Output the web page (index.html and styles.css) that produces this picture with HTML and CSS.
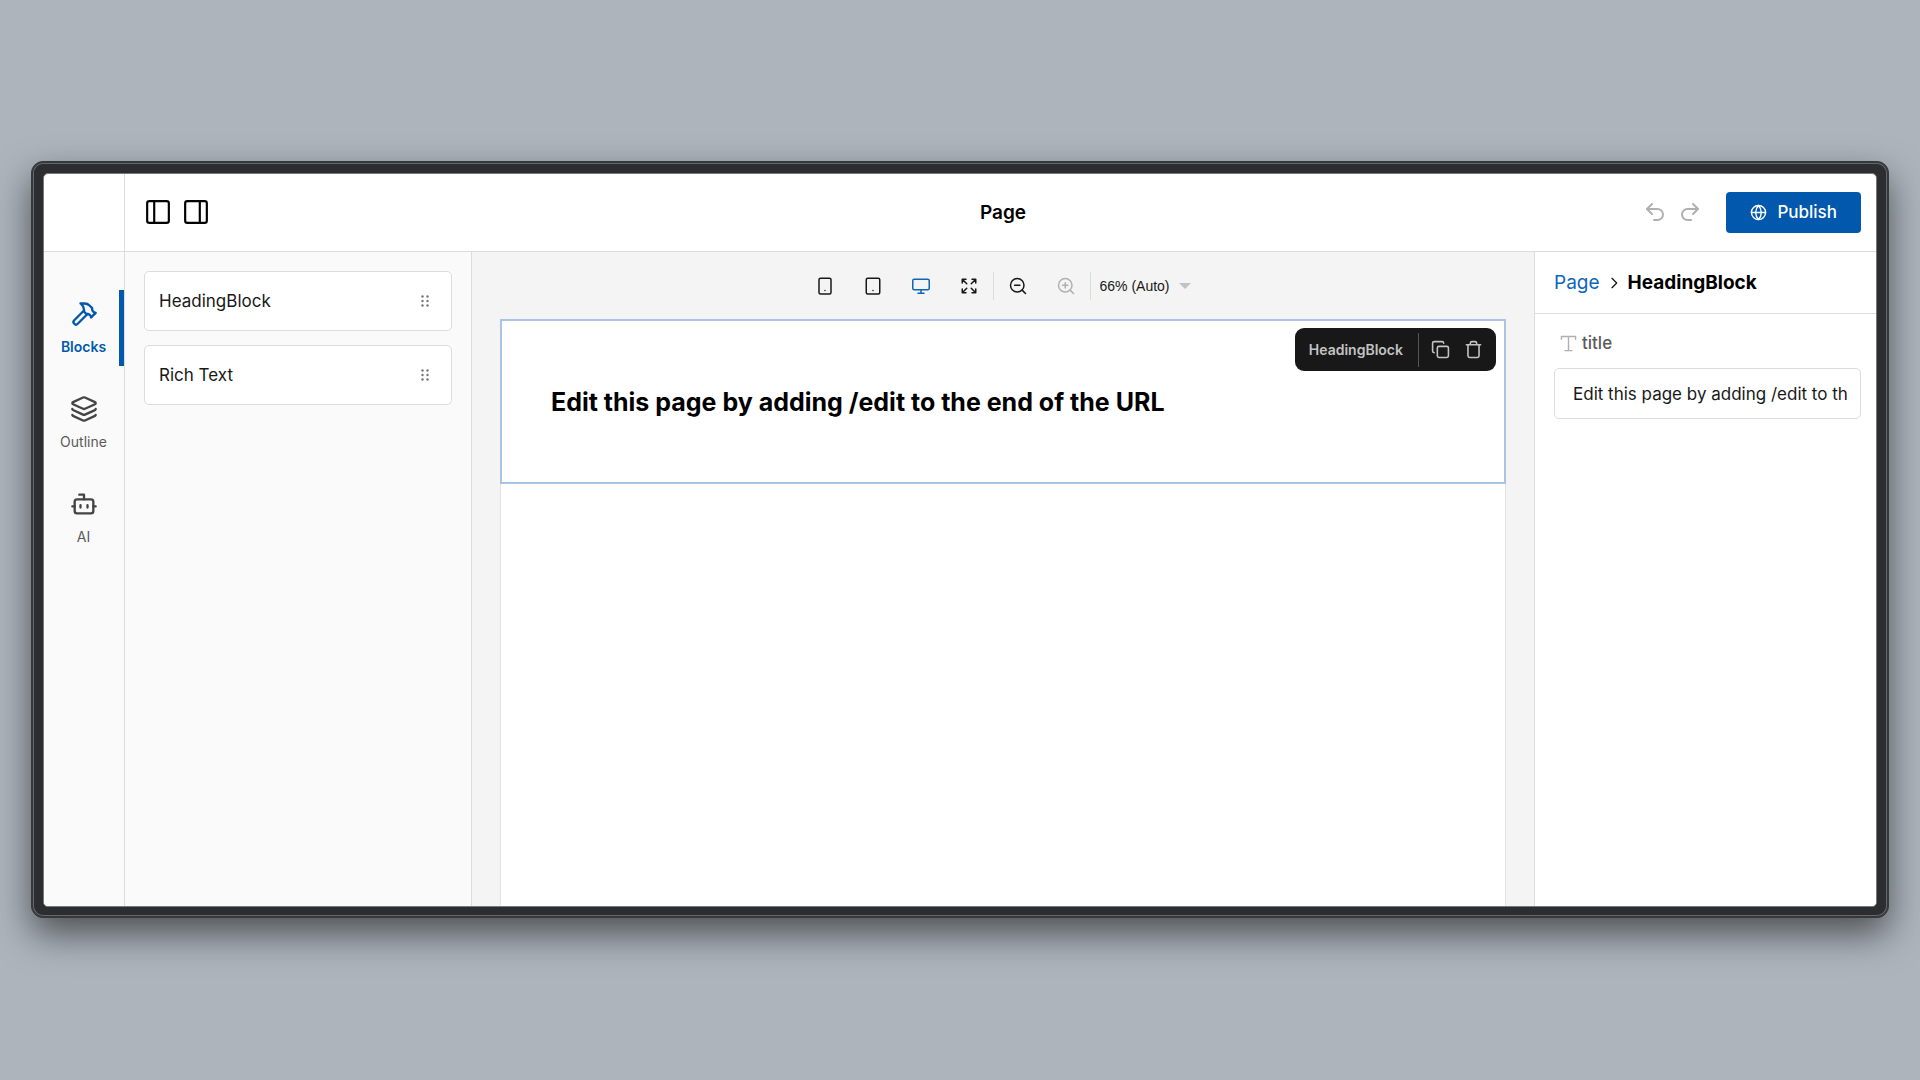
FILE: index.html
```html
<!DOCTYPE html>
<html lang="en">
<head>
<meta charset="utf-8">
<title>Page editor</title>
<meta name="viewport" content="width=device-width, initial-scale=1">
<link rel="stylesheet" href="styles.css">
</head>
<body>
<div class="frame">
<div class="editor">
  <header class="header">
    <div class="header-corner"></div>
    <div class="header-main">
      <div class="panel-toggles">
        <button class="icon-button" type="button" aria-label="Toggle left sidebar"><svg class="icon icon-toggle" viewBox="0 0 24 24"><rect x="2" y="2" width="20" height="20" rx="2"/><path d="M8.500 2v20"/></svg></button>
        <button class="icon-button" type="button" aria-label="Toggle right sidebar"><svg class="icon icon-toggle" viewBox="0 0 24 24"><rect x="2" y="2" width="20" height="20" rx="2"/><path d="M15.500 2v20"/></svg></button>
      </div>
      <h1 class="header-title">Page</h1>
      <div class="header-actions">
        <button class="icon-button faded" type="button" aria-label="Undo"><svg class="icon icon-history" viewBox="0 0 24 24"><path d="M9 14 4 9l5-5"/><path d="M4 9h10.500a5.500 5.500 0 0 1 0 11H11"/></svg></button>
        <button class="icon-button faded" type="button" aria-label="Redo"><svg class="icon icon-history" viewBox="0 0 24 24"><path d="m15 14 5-5-5-5"/><path d="M20 9H9.500a5.500 5.500 0 0 0 0 11H13"/></svg></button>
        <button class="publish" type="button"><svg class="icon icon-globe" viewBox="0 0 24 24"><circle cx="12" cy="12" r="10"/><path d="M12 2a14.500 14.500 0 0 0 0 20 14.500 14.500 0 0 0 0-20M2 12h20"/></svg>Publish</button>
      </div>
    </div>
  </header>
  <div class="workspace">
    <nav class="rail" aria-label="Plugins">
      <button class="rail-item active" type="button"><svg class="icon icon-rail" viewBox="0 0 24 24"><path d="m15 12-8.373 8.373a1 1 0 1 1-3-3L12 9"/><path d="m18 15 4-4"/><path d="m21.500 11.500-1.914-1.914A2 2 0 0 1 19 8.172V7l-2.260-2.260a6 6 0 0 0-4.202-1.756L9 2.960l.920.820A6.180 6.180 0 0 1 12 8.400V10l2 2h1.172a2 2 0 0 1 1.414.586L18.500 14.500"/></svg>Blocks</button>
      <button class="rail-item" type="button"><svg class="icon icon-rail" viewBox="0 0 24 24"><path d="M12.830 2.180a2 2 0 0 0-1.660 0L2.600 6.080a1 1 0 0 0 0 1.830l8.580 3.910a2 2 0 0 0 1.660 0l8.580-3.900a1 1 0 0 0 0-1.830z"/><path d="M2 12a1 1 0 0 0 .58.910l8.600 3.910a2 2 0 0 0 1.650 0l8.580-3.900A1 1 0 0 0 22 12"/><path d="M2 17a1 1 0 0 0 .58.910l8.600 3.910a2 2 0 0 0 1.650 0l8.580-3.900A1 1 0 0 0 22 17"/></svg>Outline</button>
      <button class="rail-item" type="button"><svg class="icon icon-rail" viewBox="0 0 24 24"><path d="M12 8V4H8"/><rect width="16" height="12" x="4" y="8" rx="2"/><path d="M2 14h2M20 14h2M15 13v2M9 13v2"/></svg>AI</button>
    </nav>
    <aside class="blocks">
      <div class="block-card">HeadingBlock<svg class="grip" viewBox="0 0 8 12"><circle cx="1.500" cy="1.500" r="1.200"/><circle cx="6.500" cy="1.500" r="1.200"/><circle cx="1.500" cy="6" r="1.200"/><circle cx="6.500" cy="6" r="1.200"/><circle cx="1.500" cy="10.500" r="1.200"/><circle cx="6.500" cy="10.500" r="1.200"/></svg></div>
      <div class="block-card">Rich Text<svg class="grip" viewBox="0 0 8 12"><circle cx="1.500" cy="1.500" r="1.200"/><circle cx="6.500" cy="1.500" r="1.200"/><circle cx="1.500" cy="6" r="1.200"/><circle cx="6.500" cy="6" r="1.200"/><circle cx="1.500" cy="10.500" r="1.200"/><circle cx="6.500" cy="10.500" r="1.200"/></svg></div>
    </aside>
    <main class="canvas">
      <div class="viewport-bar">
        <button class="icon-button tool" type="button" aria-label="Small viewport"><svg class="icon icon-tool" viewBox="0 0 24 24"><rect width="16" height="21" x="4" y="1.500" rx="2"/><path d="M12 18h.01"/></svg></button>
        <button class="icon-button tool" type="button" aria-label="Medium viewport"><svg class="icon icon-tool" viewBox="0 0 24 24"><rect width="18" height="21" x="3" y="1.500" rx="2"/><path d="M12 18h.01"/></svg></button>
        <button class="icon-button tool selected" type="button" aria-label="Large viewport"><svg class="icon icon-tool" viewBox="0 0 24 24"><rect width="22" height="14" x="1" y="3" rx="2"/><path d="M8 21.500h8M12 17v4"/></svg></button>
        <button class="icon-button tool" type="button" aria-label="Full width"><svg class="icon icon-tool" viewBox="0 0 24 24"><path d="m15 15 6 6M15 9l6-6M21 16v5h-5M21 8V3h-5M3 16v5h5M3 21l6-6M3 8V3h5M9 9 3 3"/></svg></button>
        <span class="divider"></span>
        <button class="icon-button tool" type="button" aria-label="Zoom out"><svg class="icon icon-tool" viewBox="0 0 24 24"><circle cx="11" cy="11" r="9"/><path d="m22 22-4.500-4.500M7.500 11h7"/></svg></button>
        <button class="icon-button tool faded" type="button" aria-label="Zoom in"><svg class="icon icon-tool" viewBox="0 0 24 24"><circle cx="11" cy="11" r="9"/><path d="m22 22-4.500-4.500M7.500 11h7M11 7.500v7"/></svg></button>
        <span class="divider"></span>
        <div class="zoom">
          <select class="zoom-select" aria-label="Zoom level"><option>66% (Auto)</option></select>
          <svg class="caret" viewBox="0 0 12 6"><path d="M0 0h12L6 6z"/></svg>
        </div>
      </div>
      <div class="page">
        <section class="heading-block">
          <h2 class="heading-text">Edit this page by adding /edit to the end of the URL</h2>
          <div class="action-bar">
            <span class="action-label">HeadingBlock</span>
            <button class="icon-button action" type="button" aria-label="Duplicate"><svg class="icon icon-action" viewBox="0 0 24 24"><rect width="14" height="14" x="8" y="8" rx="2"/><path d="M4 16c-1.100 0-2-.9-2-2V4c0-1.100.9-2 2-2h10c1.100 0 2 .9 2 2"/></svg></button>
            <button class="icon-button action" type="button" aria-label="Delete"><svg class="icon icon-action" viewBox="0 0 24 24"><path d="M3 6h18M19 6v14c0 1-1 2-2 2H7c-1 0-2-1-2-2V6M8 6V4c0-1 1-2 2-2h4c1 0 2 1 2 2v2"/></svg></button>
          </div>
        </section>
      </div>
    </main>
    <aside class="fields">
      <div class="breadcrumbs">
        <a class="crumb" href="#">Page</a>
        <svg class="icon chevron" viewBox="0 0 24 24"><path d="m9 19 7-7-7-7"/></svg>
        <h2 class="crumb-current">HeadingBlock</h2>
      </div>
      <div class="field">
        <label class="field-label" for="title"><svg class="icon icon-type" viewBox="0 0 24 24"><path d="M2 6V2h20v4M12 2v20M7 22h10"/></svg>title</label>
        <input class="field-input" id="title" type="text" value="Edit this page by adding /edit to the end of the URL">
      </div>
    </aside>
  </div>
</div>
</div>
</body>
</html>
```
FILE: styles.css
```css
* { box-sizing: border-box; }

body {
  margin: 0;
  min-height: 100vh;
  padding: 0 31px 1px;
  display: flex;
  align-items: center;
  background: #adb4bc;
  color: #181818;
  font-family: Inter, "Liberation Sans", sans-serif;
  font-size: 17px;
}

button, input, select { font: inherit; color: inherit; }

.frame {
  flex: 1;
  display: flex;
  min-height: calc(70vh + 1px);
  padding: 11px 11px 10px;
  border: 1px solid #35393c;
  border-radius: 12px;
  background: #2c2d31;
  box-shadow: inset 0 0 0 1px #35393c, inset 0 0 0 2px #64686b, 0 16px 36px rgba(0, 0, 0, 0.55);
}

.editor {
  flex: 1;
  display: flex;
  flex-direction: column;
  overflow: hidden;
  border: 1px solid #77787b;
  border-radius: 5px;
  background: #fff;
}

.icon {
  display: block;
  flex: none;
  fill: none;
  stroke: currentColor;
  stroke-width: 2;
  stroke-linecap: round;
  stroke-linejoin: round;
}

.icon-button {
  display: grid;
  place-items: center;
  padding: 0;
  border: 0;
  background: none;
}

.faded { color: #b0b0b0; }

.header {
  display: flex;
  height: 78px;
  border-bottom: 1px solid #dcdcdc;
}

.header-corner {
  width: 81px;
  border-right: 1px solid #dcdcdc;
}

.header-main {
  flex: 1;
  display: grid;
  grid-template-columns: 1fr auto 1fr;
  align-items: center;
  padding: 0 15px 1px 20px;
}

.panel-toggles { display: flex; gap: 12px; color: #000; }
.icon-toggle { width: 26px; height: 26px; }

.header-title {
  margin: 0;
  color: #000;
  font-size: 19px;
  font-weight: 600;
}

.header-actions {
  display: flex;
  justify-content: flex-end;
  align-items: center;
  gap: 11px;
}

.icon-history { width: 24px; height: 24px; }

.publish {
  display: flex;
  align-items: center;
  gap: 10px;
  height: 41px;
  margin-left: 13px;
  padding: 0 24px;
  border: 0;
  border-radius: 4px;
  background: #0158ad;
  color: #fff;
  font-weight: 500;
}

.icon-globe { width: 17px; height: 17px; }

.workspace { flex: 1; display: flex; }

.rail {
  display: flex;
  flex-direction: column;
  gap: 19px;
  width: 81px;
  padding-top: 38px;
  border-right: 1px solid #dcdcdc;
  background: #fafafa;
}

.rail-item {
  display: flex;
  flex-direction: column;
  align-items: center;
  gap: 10px;
  height: 76px;
  padding: 10px 0 0 4px;
  border: 0;
  border-right: 5px solid transparent;
  background: none;
  color: #5a5a5a;
  font-size: 14px;
}

.rail-item .icon { color: #444; }

.rail-item.active {
  border-right-color: #0158ad;
  color: #0158ad;
  font-weight: 600;
}

.rail-item.active .icon { color: inherit; }
.icon-rail { width: 28px; height: 28px; }

.blocks {
  display: flex;
  flex-direction: column;
  gap: 14px;
  width: 347px;
  padding: 19px;
  border-right: 1px solid #dcdcdc;
  background: #fafafa;
}

.block-card {
  display: flex;
  align-items: center;
  justify-content: space-between;
  height: 60px;
  padding: 0 22px 0 14px;
  border: 1px solid #dcdcdc;
  border-radius: 5px;
  background: #fff;
}

.grip { width: 8px; height: 12px; fill: #767676; }

.canvas {
  flex: 1;
  display: flex;
  flex-direction: column;
  min-width: 0;
  padding: 0 28px;
  background: #f4f4f4;
}

.viewport-bar {
  display: flex;
  justify-content: center;
  align-items: center;
  height: 67px;
}

.tool { width: 48px; height: 28px; }
.tool.selected { color: #0c65bd; }
.icon-tool { width: 18px; height: 18px; }

.divider {
  width: 1px;
  height: 28px;
  background: #dcdcdc;
}

.zoom {
  display: flex;
  align-items: center;
  gap: 8px;
  padding: 0 15px 0 9px;
}

.zoom-select {
  appearance: none;
  padding: 0;
  border: 0;
  background: none;
  font-family: "Liberation Sans", Arial, sans-serif;
  font-size: 14px;
}

.caret { width: 12px; height: 6px; fill: #c2c2c2; }

.page {
  flex: 1;
  border: solid #e2e2e2;
  border-width: 0 1px;
  background: #fff;
}

.heading-block {
  position: relative;
  display: flex;
  align-items: center;
  height: 165px;
  margin: 0 -1px;
  padding: 0 49px;
  border: 2px solid #a8c5e4;
}

.heading-text {
  margin: 0;
  color: #000;
  font-size: 25px;
  font-weight: 700;
}

.action-bar {
  position: absolute;
  top: 7px;
  right: 8px;
  display: flex;
  align-items: center;
  height: 43px;
  padding: 0 6px 0 14px;
  border-radius: 9px;
  background: #181818;
  color: #c3c3c3;
}

.action-label {
  padding-right: 15px;
  border-right: 1px solid #555;
  font-size: 14px;
  font-weight: 600;
  line-height: 34px;
}

.action { width: 33px; height: 34px; }
.action:first-of-type { margin-left: 5px; }
.icon-action { width: 19px; height: 19px; }

.fields {
  width: 342px;
  border-left: 1px solid #dcdcdc;
  background: #fff;
}

.breadcrumbs {
  display: flex;
  align-items: center;
  gap: 6px;
  height: 62px;
  padding: 0 19px;
  border-bottom: 1px solid #dcdcdc;
  font-size: 19px;
}

.crumb { color: #0c65bd; text-decoration: none; }
.chevron { width: 16px; height: 16px; }

.crumb-current {
  margin: 0;
  color: #000;
  font-size: inherit;
  font-weight: 700;
}

.field { padding: 19px 15px 0 19px; }

.field-label {
  display: flex;
  align-items: center;
  gap: 5px;
  padding-left: 6px;
  margin-bottom: 14px;
  color: #5a5a5a;
  font-weight: 500;
  line-height: 21px;
}

.icon-type { width: 17px; height: 17px; color: #b0b0b0; }

.field-input {
  display: block;
  width: 100%;
  height: 51px;
  padding: 0 13px 0 18px;
  border: 1px solid #dcdcdc;
  border-radius: 5px;
  background: #fff;
}
```
